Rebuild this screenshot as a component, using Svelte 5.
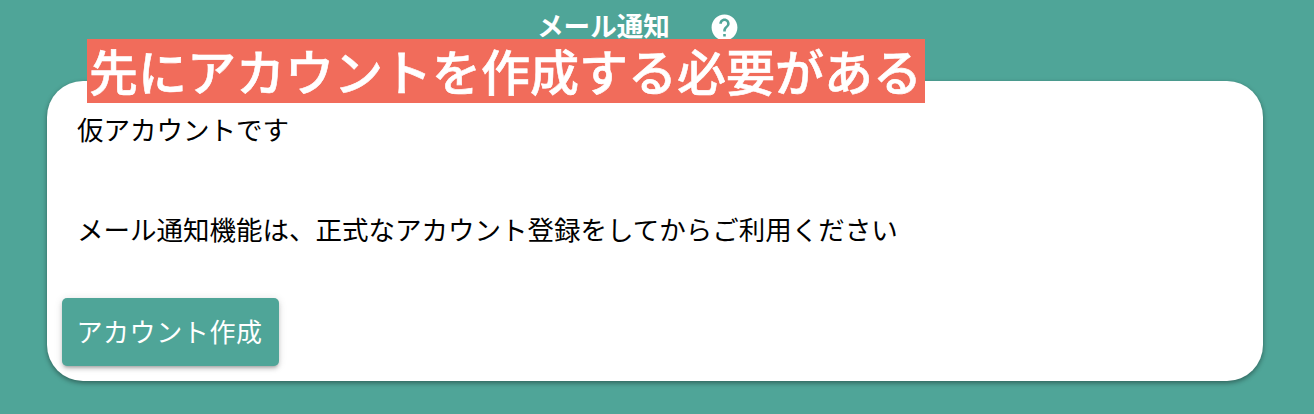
<script lang="ts">
  const title = 'メール通知';
  const heading = '先にアカウントを作成する必要がある';
</script>

<div class="page">
  <header class="page-head">
    <span class="page-title">{title}</span>
    <svg class="help-icon" viewBox="0 0 24 24" aria-hidden="true">
      <path
        d="M12 2C6.48 2 2 6.48 2 12s4.48 10 10 10 10-4.48 10-10S17.52 2 12 2zm1 17h-2v-2h2v2zm2.07-7.75l-.9.92C13.45 12.9 13 13.5 13 15h-2v-.5c0-1.1.45-2.1 1.17-2.83l1.24-1.26c.37-.36.59-.86.59-1.41 0-1.1-.9-2-2-2s-2 .9-2 2H8c0-2.21 1.79-4 4-4s4 1.79 4 4c0 .88-.36 1.68-.93 2.25z"
      />
    </svg>
  </header>

  <h1 class="warning">{heading}</h1>

  <section class="card">
    <p class="line">仮アカウントです</p>
    <p class="line notice">メール通知機能は、正式なアカウント登録をしてからご利用ください</p>
    <button class="create-btn" type="button">アカウント作成</button>
  </section>
</div>

<style>
  :global(body) {
    background: #4fa598;
  }

  .page {
    width: 1314px;
    height: 414px;
    overflow: hidden;
    box-sizing: border-box;
    padding: 10px 51px 0 47px;
    background: #4fa598;
    font-family: 'Noto Sans CJK JP', 'Noto Sans', sans-serif;
    display: flex;
    flex-direction: column;
    align-items: flex-start;
  }

  .page-head {
    height: 29px;
    display: flex;
    align-items: center;
    padding-left: 490px;
    gap: 39px;
  }

  .page-title {
    color: #fff;
    font-size: 26.6px;
    font-weight: 700;
    line-height: 29px;
  }

  .help-icon {
    width: 31px;
    height: 31px;
    margin-top: 5px;
    fill: #fff;
    flex: none;
  }

  .warning {
    position: relative;
    z-index: 1;
    margin: 0 0 -22px 40px;
    padding: 0 3px 0 2px;
    height: 64px;
    line-height: 61px;
    background: #f16c5b;
    color: #fff;
    font-size: 49px;
    font-weight: 500;
    -webkit-text-stroke: 0.6px #fff;
    white-space: nowrap;
  }

  .card {
    width: 100%;
    height: 300px;
    box-sizing: border-box;
    padding: 26px 15px 15px;
    background: #fff;
    border-radius: 36px;
    box-shadow: 0 2px 5px rgb(0 0 0 / 0.4);
    display: flex;
    flex-direction: column;
    align-items: flex-start;
  }

  .line {
    margin: 0 0 0 15px;
    color: #000;
    font-size: 26.5px;
    line-height: 44px;
    white-space: nowrap;
  }

  .notice {
    margin-top: 56px;
  }

  .create-btn {
    margin-top: auto;
    width: 217px;
    height: 68px;
    padding: 0 2px 4px 0;
    border: 0;
    border-radius: 5px;
    background: #4fa598;
    color: #fff;
    font: inherit;
    font-size: 26px;
    letter-spacing: 0.6px;
    box-shadow:
      0 3px 3px -2px rgb(0 0 0 / 0.2),
      0 3px 4px 0 rgb(0 0 0 / 0.14),
      0 1px 8px 0 rgb(0 0 0 / 0.12);
  }
</style>
